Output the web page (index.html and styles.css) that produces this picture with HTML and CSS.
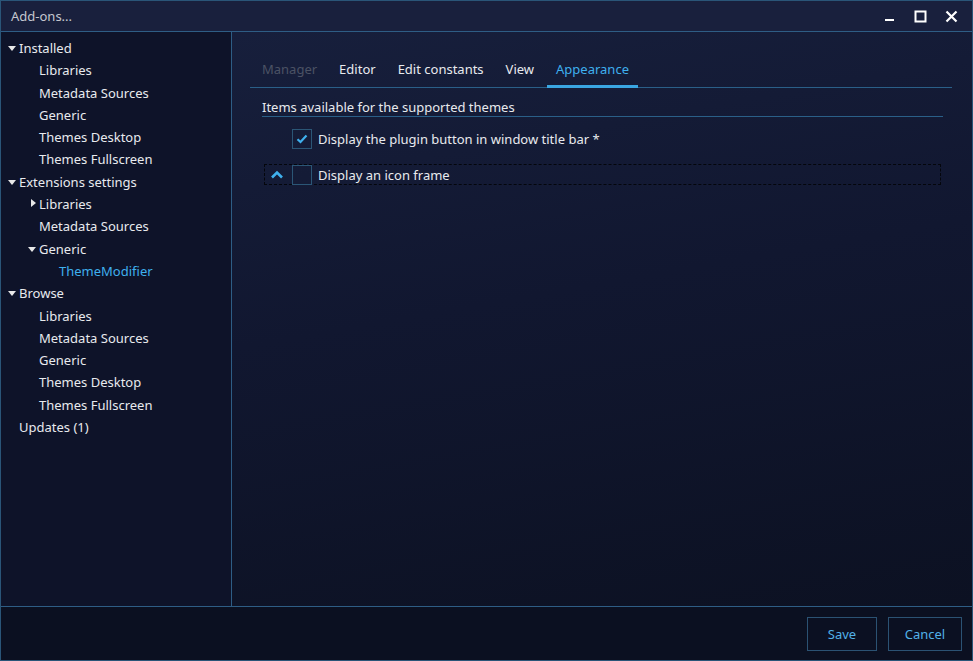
FILE: index.html
```html
<!DOCTYPE html>
<html lang="en">
  <head>
    <meta charset="UTF-8" />
    <title>Add-ons...</title>
    <link rel="stylesheet" href="styles.css">
  </head>
  <body>
    <div class="window">
      <div class="titlebar">
        <span class="title">Add-ons...</span>
        <div class="controls">
          <svg class="ctl" width="12" height="12" viewBox="0 0 12 12"><rect x="1" y="9" width="9" height="2" fill="#fff"/></svg>
          <svg class="ctl" width="13" height="13" viewBox="0 0 13 13"><rect x="1.5" y="1.5" width="10" height="10" fill="none" stroke="#fff" stroke-width="2"/></svg>
          <svg class="ctl" width="13" height="13" viewBox="0 0 13 13"><path d="M1.5 1.5 L11.5 11.5 M11.5 1.5 L1.5 11.5" stroke="#fff" stroke-width="2.2"/></svg>
        </div>
      </div>

      <div class="main">
        <div class="sidebar">
          <div class="node lv0"><span class="arrow down"></span>Installed</div>
          <div class="node lv1">Libraries</div>
          <div class="node lv1">Metadata Sources</div>
          <div class="node lv1">Generic</div>
          <div class="node lv1">Themes Desktop</div>
          <div class="node lv1">Themes Fullscreen</div>
          <div class="node lv0"><span class="arrow down"></span>Extensions settings</div>
          <div class="node lv1"><span class="arrow right"></span>Libraries</div>
          <div class="node lv1">Metadata Sources</div>
          <div class="node lv1"><span class="arrow down"></span>Generic</div>
          <div class="node lv2 selected">ThemeModifier</div>
          <div class="node lv0"><span class="arrow down"></span>Browse</div>
          <div class="node lv1">Libraries</div>
          <div class="node lv1">Metadata Sources</div>
          <div class="node lv1">Generic</div>
          <div class="node lv1">Themes Desktop</div>
          <div class="node lv1">Themes Fullscreen</div>
          <div class="node lv0">Updates (1)</div>
        </div>

        <div class="content">
          <div class="tabs">
            <div class="tab disabled">Manager</div>
            <div class="tab">Editor</div>
            <div class="tab">Edit constants</div>
            <div class="tab">View</div>
            <div class="tab active">Appearance</div>
          </div>

          <div class="section">
            <div class="section-title">Items available for the supported themes</div>
            <div class="row">
              <span class="checkbox">
                <svg width="12" height="10" viewBox="0 0 12 10"><path d="M1.5 5.2 L4.5 8 L10.5 1.5" fill="none" stroke="#3fb0ee" stroke-width="2.2"/></svg>
              </span>
              <span>Display the plugin button in window title bar *</span>
            </div>
            <div class="row group">
              <svg class="chevron" width="14" height="9" viewBox="0 0 14 9"><path d="M2 7.5 L7 2.5 L12 7.5" fill="none" stroke="#3fb0ee" stroke-width="2.6"/></svg>
              <span class="checkbox"></span>
              <span>Display an icon frame</span>
            </div>
          </div>
        </div>
      </div>

      <div class="footer">
        <button class="btn save">Save</button>
        <button class="btn cancel">Cancel</button>
      </div>
    </div>
  </body>
</html>
```

FILE: styles.css
```css
body {
  margin: 0;
  background-color: #0b1020;
  font-family: "Noto Sans", "Open Sans", sans-serif;
  font-size: 13px;
  color: #e8eaee;
}

.window {
  width: 973px;
  height: 661px;
  box-sizing: border-box;
  border: 1px solid #2a5578;
  display: flex;
  flex-direction: column;
}

/* title bar */
.titlebar {
  height: 30px;
  background-color: #19203d;
  border-bottom: 1px solid #2e5d85;
  display: flex;
  align-items: center;
  justify-content: space-between;
  padding: 0 14px 0 10px;
}

.title {
  color: #c4c7cf;
  font-size: 13px;
}

.controls {
  display: flex;
  align-items: center;
  gap: 18px;
}

.ctl {
  display: block;
}

.main {
  flex: 1;
  display: flex;
  min-height: 0;
}

/* left tree */
.sidebar {
  width: 230px;
  border-right: 1px solid #2e5d85;
  background-color: #0e1329;
  padding-top: 5px;
}

.node {
  height: 22.3px;
  line-height: 22px;
  white-space: nowrap;
  position: relative;
}

.lv0 { padding-left: 18px; }
.lv1 { padding-left: 38px; }
.lv2 { padding-left: 58px; }

.node.selected {
  color: #3fb0ee;
}

.arrow {
  position: absolute;
  top: 9px;
  width: 0;
  height: 0;
}

.lv0 .arrow { left: 7px; }
.lv1 .arrow { left: 27px; }

.arrow.down {
  border-left: 4.5px solid transparent;
  border-right: 4.5px solid transparent;
  border-top: 5px solid #e8e8e8;
}

.arrow.right {
  top: 6px;
  left: 30px !important;
  border-top: 4.5px solid transparent;
  border-bottom: 4.5px solid transparent;
  border-left: 5px solid #e8e8e8;
}

/* right panel */
.content {
  flex: 1;
  padding: 20px 20px 0 18px;
  background: linear-gradient(170deg, #171f3c 0%, #111730 45%, #0c1122 100%);
}

.tabs {
  display: flex;
  border-bottom: 1px solid #2a5f88;
  padding-left: 3px;
  gap: 4px;
}

.tab {
  height: 33px;
  line-height: 34px;
  padding: 0 9px;
  border-bottom: 3px solid transparent;
  margin-bottom: -1px;
  white-space: nowrap;
}

.tab.disabled {
  color: #4b5264;
}

.tab.active {
  color: #3fb0ee;
  border-bottom-color: #3aa6e2;
}

.section {
  margin: 0 9px 0 12px;
}

.section-title {
  margin-top: 10px;
  line-height: 18px;
  padding-bottom: 0;
  border-bottom: 1px solid #2a5f88;
}

.row {
  display: flex;
  align-items: center;
  gap: 6px;
  height: 22px;
  padding-left: 30px;
  margin-top: 11px;
}

.row.group {
  margin-top: 14px;
  margin-left: 2px;
  margin-right: 2px;
  padding-left: 5px;
  border: 1px dashed #04060c;
  height: 19px;
}

.chevron {
  margin-right: 2px;
}

.checkbox {
  width: 18px;
  height: 18px;
  border: 1px solid #2b5676;
  display: flex;
  align-items: center;
  justify-content: center;
  flex-shrink: 0;
}

/* footer */
.footer {
  height: 54px;
  border-top: 1px solid #2e5d85;
  background-color: #0b1021;
  display: flex;
  justify-content: flex-end;
  align-items: flex-start;
  gap: 11px;
  padding: 10px 10px 0 0;
  box-sizing: border-box;
}

.btn {
  height: 34px;
  background-color: #0b1022;
  border: 1px solid #2b5273;
  color: #52b2e8;
  font-family: "Noto Sans", "Open Sans", sans-serif;
  font-size: 13px;
  padding: 0;
  cursor: pointer;
}

.btn.save { width: 70px; }
.btn.cancel { width: 74px; }
```
